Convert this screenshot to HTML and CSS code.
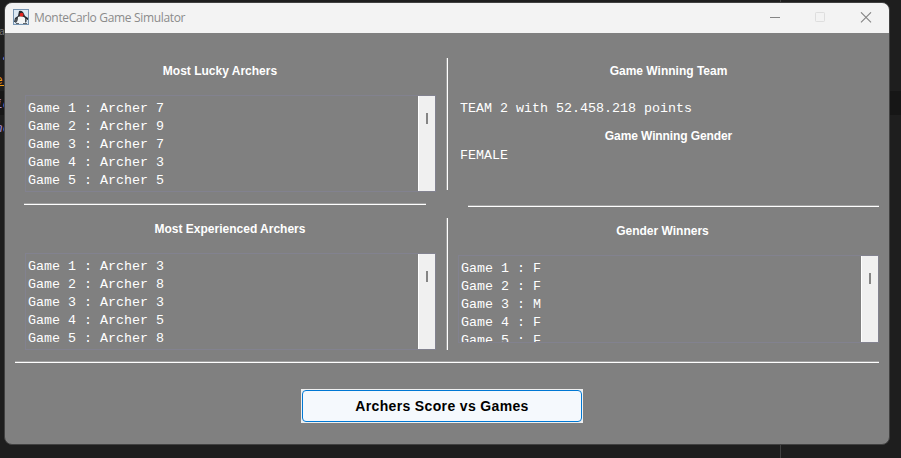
FILE: index.html
```html
<!DOCTYPE html>
<html lang="en">
<head>
<meta charset="utf-8">
<title>MonteCarlo Game Simulator</title>
<link rel="stylesheet" href="styles.css">
</head>
<body>
<div class="desktop">
  <div class="editor-highlight"></div>
  <div class="editor-guide"></div>
  <div class="editor-code"><span class="c-grey">a</span><span class="c-mix">.a</span><span class="c-orange">el</span><span class="c-mix">ic</span><span class="c-mix">ne</span></div>
  <main class="window">
    <header class="titlebar">
      <svg class="app-icon" width="16" height="16" viewBox="0 0 16 16">
        <rect x=".5" y=".5" width="15" height="15" fill="#dce8f3" stroke="#7795b2"/>
        <path d="M6 2Q8 1 10 3L12 7L15 9V11L12 10L11 8L6 9L4 13H1L2 9L5 7Z" fill="#262b30"/>
        <path d="M5 8Q9 6 12 9L13 13L10 15L8 14L5 15L4 13Z" fill="#f5f6f6"/>
        <path d="M2 10L5 9L4 13L2 14ZM12 9L14 12L12 14" fill="#4c5358"/>
        <circle cx="8.6" cy="5.7" r="1.9" fill="#e52420"/>
        <path d="M3 14.5H6M10 14.5H14" stroke="#62676c"/>
      </svg>
      <h1>MonteCarlo Game Simulator</h1>
      <svg class="controls" width="104" height="12" viewBox="0 0 104 12" fill="none">
        <path d="M0 5.5H10" stroke="#858585"/>
        <rect x="45.5" y=".5" width="9" height="9" rx=".7" stroke="#dedede"/>
        <path d="M91 .3L101 10.3M101 .3L91 10.3" stroke="#858585" stroke-width="1.1"/>
      </svg>
    </header>
    <div class="results">
      <section class="column left">
        <h2 class="heading lucky">Most Lucky Archers</h2>
        <div class="list"><pre>Game 1 : Archer 7
Game 2 : Archer 9
Game 3 : Archer 7
Game 4 : Archer 3
Game 5 : Archer 5</pre><div class="scrollbar"><i></i></div></div>
        <div class="rule"></div>
        <h2 class="heading">Most Experienced Archers</h2>
        <div class="list"><pre>Game 1 : Archer 3
Game 2 : Archer 8
Game 3 : Archer 3
Game 4 : Archer 5
Game 5 : Archer 8</pre><div class="scrollbar"><i></i></div></div>
      </section>
      <div class="dividers"><div></div><div></div></div>
      <section class="column right">
        <h2 class="heading">Game Winning Team</h2>
        <pre class="team">TEAM 2 with 52.458.218 points</pre>
        <h2 class="heading gender-heading">Game Winning Gender</h2>
        <pre class="gender">FEMALE</pre>
        <div class="rule"></div>
        <h2 class="heading winners">Gender Winners</h2>
        <div class="list short"><pre>Game 1 : F
Game 2 : F
Game 3 : M
Game 4 : F
Game 5 : F</pre><div class="scrollbar"><i></i></div></div>
      </section>
    </div>
    <div class="rule bottom-rule"></div>
    <div class="button-frame"><button>Archers Score vs Games</button></div>
  </main>
</div>
</body>
</html>
```

FILE: styles.css
```css
* { box-sizing: border-box; }
body { margin: 0; }
h1, h2, pre { margin: 0; }
.desktop {
  position: relative;
  width: 901px;
  height: 458px;
  padding: 2px 11px 13px 4px;
  overflow: hidden;
  background: #1e1e1e;
}
.editor-highlight {
  position: absolute;
  top: 91px;
  left: 0;
  width: 901px;
  height: 24px;
  background: #161616;
}
.editor-guide {
  position: absolute;
  left: 780px;
  top: 0;
  width: 1px;
  height: 458px;
  background: #414141;
}
.editor-code {
  position: absolute;
  top: 21px;
  left: -5px;
  display: grid;
  font: italic 13px/24px "Liberation Mono", monospace;
}
.c-grey { padding-left: 4px; color: #777; font-size: 10px; font-style: normal; }
.c-mix { color: #a386c9; }
.c-orange { color: #f39a13; text-decoration: underline; font-style: normal; }
.window {
  position: relative;
  width: 886px;
  height: 443px;
  border: 1px solid #414141;
  border-radius: 8px;
  overflow: hidden;
  background: #808080;
}
.titlebar {
  display: flex;
  align-items: center;
  height: 30px;
  padding: 0 15px 0 8px;
  background: #f3f3f3;
}
.app-icon { display: block; margin-bottom: 2px; }
.titlebar h1 {
  margin-left: 5px;
  color: #8b8b8b;
  font: 400 12px/16px "Open Sans", sans-serif;
  letter-spacing: -.33px;
}
.controls { margin-left: auto; margin-bottom: 1px; }
.results {
  display: grid;
  grid-template-columns: 441px 2px 1fr;
  height: 328px;
}
.column { display: flex; flex-direction: column; }
.left { padding: 30px 10px 0 19px; }
.right { padding: 30px 10px 0 10px; }
.heading {
  height: 16px;
  color: #fff;
  font: 700 12px/16px "Liberation Sans", sans-serif;
  text-align: center;
}
.lucky { padding-right: 20px; }
.winners { padding-right: 12px; }
.gender-heading { letter-spacing: -.1px; }
pre {
  color: #fff;
  font: 13.333px/18px "Liberation Mono", monospace;
}
.list {
  display: flex;
  justify-content: space-between;
  flex: none;
  height: 97px;
  margin: 16px 0 0 1px;
  border: 1px solid #82828f;
  overflow: hidden;
}
.list pre { padding: 4px 0 0 2px; }
.scrollbar {
  width: 17px;
  flex: none;
  padding: 17px 0 0 8px;
  border-left: 1px solid #fff;
  background: #f0f0f0;
}
.scrollbar i {
  display: block;
  width: 2px;
  height: 11px;
  margin-left: -1px;
  background: #858585;
}
.rule {
  flex: none;
  height: 2px;
  border-top: 1px solid #a0a0a0;
  background: #fff;
}
.left .rule { width: 402px; margin: 11px 0 16px; }
.dividers {
  display: grid;
  grid-template-rows: 132px 132px;
  gap: 28px;
  padding-top: 25px;
}
.dividers div { border-left: 1px solid #a0a0a0; background: #fff; }
.team { margin: 21px 0 10px 2px; }
.gender { margin: 3px 0 40px 2px; }
.right .rule { margin: 0 0 16px 10px; }
.right .list { height: 88px; margin-left: 0; }
.bottom-rule { margin: 0 10px; }
.button-frame {
  width: 282px;
  height: 34px;
  margin: 26px 0 0 296px;
  padding: 1px;
  background: #f0f0f0;
}
button {
  display: block;
  width: 280px;
  height: 32px;
  padding: 0;
  border: 1px solid #0078d4;
  border-radius: 4px;
  background: #f5f9fd;
  color: #000;
  font: 700 14px/30px "Liberation Sans", sans-serif;
  letter-spacing: .35px;
}
```
